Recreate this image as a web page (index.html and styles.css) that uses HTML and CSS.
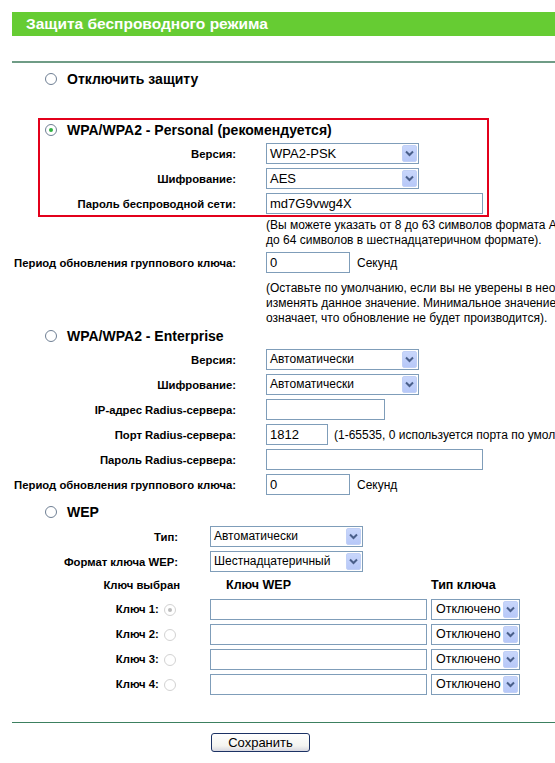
FILE: index.html
```html
<!DOCTYPE html>
<html lang="ru">
<head>
    <meta charset="UTF-8">
    <meta name="viewport" content="width=device-width, initial-scale=1.0">
    <title>Защита беспроводного режима</title>
    <link rel="stylesheet" href="styles.css">
</head>
<body>
    <div class="page">
        <div class="title">Защита беспроводного режима</div>
        <div class="rule"></div>

        <div class="option first"><span class="radio"></span>Отключить защиту</div>

        <!-- WPA/WPA2 Personal -->
        <div class="box">
            <div class="option"><span class="radio on"></span>WPA/WPA2 - Personal (рекомендуется)</div>
            <div class="form inner">
                <label>Версия:</label>
                <div class="select w153 big"><span>WPA2-PSK</span><i class="arrow"><svg width="9" height="7" viewBox="0 0 9 7"><path d="M1 1.5 L4.5 5 L8 1.5" fill="none" stroke="#4a5f8a" stroke-width="2"/></svg></i></div>
                <label>Шифрование:</label>
                <div class="select w153 big"><span>AES</span><i class="arrow"><svg width="9" height="7" viewBox="0 0 9 7"><path d="M1 1.5 L4.5 5 L8 1.5" fill="none" stroke="#4a5f8a" stroke-width="2"/></svg></i></div>
                <label>Пароль беспроводной сети:</label>
                <div class="input w217 big">md7G9vwg4X</div>
            </div>
        </div>
        <div class="form">
            <span></span>
            <div class="hint">(Вы можете указать от 8 до 63 символов формата ASCII или от 8<br>до 64 символов в шестнадцатеричном формате).</div>
            <label>Период обновления группового ключа:</label>
            <div class="line"><div class="input w84 big">0</div><span class="unit">Секунд</span></div>
            <span></span>
            <div class="hint spaced">(Оставьте по умолчанию, если вы не уверены в необходимости<br>изменять данное значение. Минимальное значение - 30, 0<br>означает, что обновление не будет производится).</div>
        </div>

        <!-- WPA/WPA2 Enterprise -->
        <div class="option section"><span class="radio"></span>WPA/WPA2 - Enterprise</div>
        <div class="form enterprise">
            <label>Версия:</label>
            <div class="select w153"><span>Автоматически</span><i class="arrow"><svg width="9" height="7" viewBox="0 0 9 7"><path d="M1 1.5 L4.5 5 L8 1.5" fill="none" stroke="#4a5f8a" stroke-width="2"/></svg></i></div>
            <label>Шифрование:</label>
            <div class="select w153"><span>Автоматически</span><i class="arrow"><svg width="9" height="7" viewBox="0 0 9 7"><path d="M1 1.5 L4.5 5 L8 1.5" fill="none" stroke="#4a5f8a" stroke-width="2"/></svg></i></div>
            <label>IP-адрес Radius-сервера:</label>
            <div class="input w119"></div>
            <label>Порт Radius-сервера:</label>
            <div class="line"><div class="input w62 big">1812</div><span class="note">(1-65535, 0 используется порта по умолчанию 1812)</span></div>
            <label>Пароль Radius-сервера:</label>
            <div class="input w217"></div>
            <label>Период обновления группового ключа:</label>
            <div class="line"><div class="input w84 big">0</div><span class="unit">Секунд</span></div>
        </div>

        <!-- WEP -->
        <div class="option section wep-head"><span class="radio"></span>WEP</div>
        <div class="wep">
            <label>Тип:</label>
            <div class="select w153 span2"><span>Автоматически</span><i class="arrow"><svg width="9" height="7" viewBox="0 0 9 7"><path d="M1 1.5 L4.5 5 L8 1.5" fill="none" stroke="#4a5f8a" stroke-width="2"/></svg></i></div>
            <label>Формат ключа WEP:</label>
            <div class="select w153 span2"><span>Шестнадцатеричный</span><i class="arrow"><svg width="9" height="7" viewBox="0 0 9 7"><path d="M1 1.5 L4.5 5 L8 1.5" fill="none" stroke="#4a5f8a" stroke-width="2"/></svg></i></div>

            <label class="col-head">Ключ выбран</label>
            <div class="col-head wep-key">Ключ WEP</div>
            <div class="col-head">Тип ключа</div>

            <label class="key">Ключ 1: <span class="radio off dot"></span></label>
            <div class="input w217"></div>
            <div class="select w89 keytype"><span>Отключено</span><i class="arrow"><svg width="9" height="7" viewBox="0 0 9 7"><path d="M1 1.5 L4.5 5 L8 1.5" fill="none" stroke="#4a5f8a" stroke-width="2"/></svg></i></div>

            <label class="key">Ключ 2: <span class="radio off"></span></label>
            <div class="input w217"></div>
            <div class="select w89 keytype"><span>Отключено</span><i class="arrow"><svg width="9" height="7" viewBox="0 0 9 7"><path d="M1 1.5 L4.5 5 L8 1.5" fill="none" stroke="#4a5f8a" stroke-width="2"/></svg></i></div>

            <label class="key">Ключ 3: <span class="radio off"></span></label>
            <div class="input w217"></div>
            <div class="select w89 keytype"><span>Отключено</span><i class="arrow"><svg width="9" height="7" viewBox="0 0 9 7"><path d="M1 1.5 L4.5 5 L8 1.5" fill="none" stroke="#4a5f8a" stroke-width="2"/></svg></i></div>

            <label class="key">Ключ 4: <span class="radio off"></span></label>
            <div class="input w217"></div>
            <div class="select w89 keytype"><span>Отключено</span><i class="arrow"><svg width="9" height="7" viewBox="0 0 9 7"><path d="M1 1.5 L4.5 5 L8 1.5" fill="none" stroke="#4a5f8a" stroke-width="2"/></svg></i></div>
        </div>

        <div class="rule bottom"></div>
        <div class="actions">
            <button class="btn">Сохранить</button>
        </div>
    </div>
</body>
</html>
```

FILE: styles.css
```css
*{
    margin: 0;
    padding: 0;
    box-sizing: border-box;
}
html, body{
    overflow: hidden;
}
body{
    font-family: "Liberation Sans", Arial, sans-serif;
    font-size: 12px;
    color: #000;
    background: #fff;
}
.page{
    padding: 12px 0 0 12px;
    width: 560px;
}
.title{
    height: 24px;
    line-height: 24px;
    padding-left: 14px;
    background-color: #66cc33;
    color: #fff;
    font-size: 15.5px;
    font-weight: bold;
}
.rule{
    margin-top: 25px;
    border-top: 2px solid #6f9c86;
}
.rule.bottom{
    margin-top: 27px;
    border-top-width: 1px;
    border-color: #3c8060;
}

/* radio rows */
.option{
    display: flex;
    align-items: center;
    height: 20px;
    padding-left: 33px;
    font-size: 14px;
    font-weight: bold;
}
.option .radio{
    margin-right: 10px;
}
.option.first{
    margin-top: 6px;
}
.option.section{
    margin-top: 0;
}
.option.wep-head{
    margin-top: 7px;
}
.radio{
    display: inline-block;
    width: 12px;
    height: 12px;
    border: 1px solid #6f7f94;
    border-radius: 50%;
    background: #fff;
    position: relative;
    vertical-align: middle;
}
.radio.on::after{
    content: "";
    position: absolute;
    left: 3px;
    top: 3px;
    width: 4px;
    height: 4px;
    border-radius: 50%;
    background: #31b042;
}
.radio.off{
    border-color: #d2d2d2;
    margin-left: 2px;
}
.radio.dot::after{
    content: "";
    position: absolute;
    left: 3px;
    top: 3px;
    width: 4px;
    height: 4px;
    border-radius: 50%;
    background: #bcbcbc;
}

/* label / control grids */
.form{
    display: grid;
    grid-template-columns: 222px 1fr;
    column-gap: 30px;
    row-gap: 4px;
    align-items: center;
    margin-left: 2px;
}
.form label,
.wep label{
    text-align: right;
    font-size: 11.3px;
    font-weight: bold;
    white-space: nowrap;
}
.box{
    width: 451px;
    margin: 29px 0 0 26px;
    border: 2px solid #e3001b;
    padding: 0 0 1px 0;
}
.box .option{
    padding-left: 5px;
}
.form.inner{
    grid-template-columns: 196px 1fr;
    margin: 3px 0 0 0;
}
.form.enterprise{
    margin-top: 3px;
}
.hint{
    line-height: 15px;
    white-space: nowrap;
    margin-top: 1px;
}
.hint.spaced{
    margin-top: 4px;
}
.line{
    display: flex;
    align-items: center;
}
.unit{
    margin-left: 7px;
}
.note{
    margin-left: 6px;
    white-space: nowrap;
}

/* fake controls */
.input,
.select{
    height: 21px;
    border: 1px solid #7f9db9;
    background: #fff;
    line-height: 19px;
    padding-left: 3px;
    white-space: nowrap;
    overflow: hidden;
}
.select{
    display: flex;
    justify-content: space-between;
    align-items: center;
}
.big{
    font-size: 13px;
}
.keytype{
    font-size: 12.5px;
    padding-left: 4px;
}
.arrow{
    display: flex;
    flex-shrink: 0;
    align-items: center;
    justify-content: center;
    width: 15px;
    height: 17px;
    margin-right: 1px;
    background: linear-gradient(#c8d6fb, #b7c8f8);
    border: 1px solid #c1d0f6;
    border-radius: 2px;
}
.w62{ width: 62px; }
.w84{ width: 84px; }
.w89{ width: 89px; }
.w119{ width: 119px; }
.w153{ width: 153px; }
.w217{ width: 217px; }

/* WEP table */
.wep{
    display: grid;
    grid-template-columns: 196px 221px 1fr;
    row-gap: 4px;
    align-items: center;
    margin: 4px 0 0 2px;
}
.wep label{
    padding-right: 32px;
}
.wep .span2{
    grid-column: span 2;
}
.wep label.key{
    padding-right: 34px;
}
.col-head{
    font-size: 12.5px;
    font-weight: bold;
    line-height: 19px;
}
.wep label.col-head{
    padding-right: 30px;
}
.wep-key{
    padding-left: 16px;
}

.actions{
    padding: 10px 0 0 199px;
}
.btn{
    width: 99px;
    height: 19px;
    font-family: "Liberation Sans", Arial, sans-serif;
    font-size: 13px;
    color: #000;
    background: linear-gradient(#ffffff 0%, #f4f4f0 70%, #d8d8e0 100%);
    border: 1px solid #1c3264;
    border-radius: 3px;
    cursor: pointer;
}
```
